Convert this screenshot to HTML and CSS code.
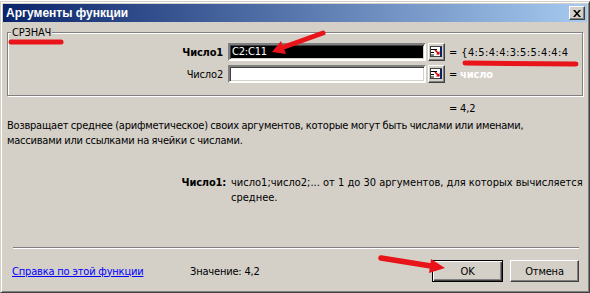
FILE: index.html
```
<!DOCTYPE html>
<html lang="ru">
<head>
<meta charset="utf-8">
<title>Аргументы функции</title>
<link rel="stylesheet" href="styles.css">
</head>
<body>
<div class="window">
  <div class="titlebar">
    <span class="title">Аргументы функции</span>
    <span class="close-btn"><svg width="8" height="7" viewBox="0 0 8 7"><path d="M0 0h2l2 2.2L6 0h2L5 3.5 8 7H6L4 4.8 2 7H0l3-3.5z" fill="#000"/></svg></span>
  </div>
  <div class="group">
    <div class="legend">СРЗНАЧ</div>
    <div class="arg-row">
      <span class="arg-label bold">Число1</span>
      <span class="field selected">C2:C11</span>
      <span class="ref-btn"><svg width="13" height="12" viewBox="0 0 13 12"><rect x="0.5" y="0.5" width="11" height="10" fill="#fff" stroke="#404040"/><path d="M1 3.5h6M1 6.5h3M1 9h3" stroke="#000"/><rect x="10" y="1" width="2" height="10" fill="#0a246a"/><path d="M5 4l4 4" stroke="#d00000" stroke-width="1.6"/><path d="M9.5 5v3.5H6z" fill="#d00000"/></svg></span>
      <span class="arg-value wide">= {4:5:4:4:3:5:5:4:4:4</span>
    </div>
    <div class="arg-row">
      <span class="arg-label">Число2</span>
      <span class="field"></span>
      <span class="ref-btn"><svg width="13" height="12" viewBox="0 0 13 12"><rect x="0.5" y="0.5" width="11" height="10" fill="#fff" stroke="#404040"/><path d="M1 3.5h6M1 6.5h3M1 9h3" stroke="#000"/><rect x="10" y="1" width="2" height="10" fill="#0a246a"/><path d="M5 4l4 4" stroke="#d00000" stroke-width="1.6"/><path d="M9.5 5v3.5H6z" fill="#d00000"/></svg></span>
      <span class="arg-value">= <b class="placeholder">число</b></span>
    </div>
  </div>
  <div class="result">= 4,2</div>
  <p class="desc">Возвращает среднее (арифметическое) своих аргументов, которые могут быть числами или именами,<br>массивами или ссылками на ячейки с числами.</p>
  <div class="arg-help">
    <span class="help-label bold">Число1:</span>
    <span class="help-text">число1;число2;... от 1 до 30 аргументов, для которых вычисляется<br>среднее.</span>
  </div>
  <div class="separator"></div>
  <div class="footer">
    <a class="help-link" href="#">Справка по этой функции</a>
    <span class="value">Значение:&nbsp;4,2</span>
    <span class="btn default">OK</span>
    <span class="btn">Отмена</span>
  </div>
</div>
<svg class="marks" width="590" height="293" viewBox="0 0 590 293">
  <g stroke="#e8141a" stroke-width="5" stroke-linecap="round" fill="none">
    <path d="M11 42 L61 42"/>
    <path d="M465 63 L576 64"/>
    <path d="M323 33 L284 47"/>
    <path d="M381 258 L431 266" stroke-width="5.5"/>
  </g>
  <g fill="#e8141a">
    <polygon points="272,52 286,54 281,41"/>
    <polygon points="445,268 429,273 431,259"/>
  </g>
</svg>
</body>
</html>
```
FILE: styles.css
```
body {
  margin: 0;
  background: #fff;
  font: 11px "DejaVu Sans Condensed", "Liberation Sans", sans-serif;
  letter-spacing: -0.18px;
  color: #000;
  position: relative;
}

.window {
  box-sizing: border-box;
  width: 590px;
  height: 292px;
  margin-top: 1px;
  border: 1px solid;
  border-color: #d4d0c8 #404040 #404040 #d4d0c8;
  box-shadow: inset 1px 1px #fff, inset -1px -1px #808080;
  background: #d4d0c8;
  padding: 2px;
}

.titlebar {
  height: 18px;
  display: flex;
  align-items: center;
  justify-content: space-between;
  padding: 0 2px 0 3px;
  background: linear-gradient(to right, #0a246a, #a6caf0);
}

.title {
  color: #fff;
  font: bold 12px "Liberation Sans", Arial, sans-serif;
  letter-spacing: 0;
}

.close-btn {
  box-sizing: border-box;
  width: 16px;
  height: 14px;
  display: flex;
  align-items: center;
  justify-content: center;
  background: #d4d0c8;
  border: 1px solid;
  border-color: #fff #404040 #404040 #fff;
  box-shadow: inset -1px -1px #808080;
}

.bold { font-weight: bold; }

.group {
  box-sizing: border-box;
  height: 64px;
  margin: 10px 4px 0;
  border: 1px solid #808080;
  box-shadow: inset 1px 1px #fff, 1px 1px #fff;
}

.legend {
  width: max-content;
  height: 13px;
  line-height: 13px;
  margin: -7px 0 0 3px;
  padding: 0 1px;
  background: #d4d0c8;
}

.arg-row {
  display: flex;
  align-items: center;
  height: 18px;
  margin-top: 4px;
}

.arg-label {
  width: 215px;
  text-align: right;
  margin-right: 5px;
}

.field {
  box-sizing: border-box;
  width: 198px;
  height: 18px;
  padding: 0 2px;
  line-height: 14px;
  background: #fff;
  border: 2px solid;
  border-color: #808080 #fff #fff #808080;
  box-shadow: inset 1px 1px #404040, inset -1px -1px #d4d0c8;
}

.field.selected {
  background: #000;
  color: #fff;
}

.ref-btn {
  box-sizing: border-box;
  width: 17px;
  height: 18px;
  margin-left: 2px;
  display: flex;
  align-items: center;
  justify-content: center;
  border: 1px solid;
  border-color: #fff #404040 #404040 #fff;
  box-shadow: inset -1px -1px #808080;
}

.arg-value {
  margin-left: 4px;
  white-space: nowrap;
}

.wide {
  letter-spacing: 0.4px;
}

.placeholder {
  color: #fff;
}

.result {
  margin: 6px 0 0 446px;
  line-height: 14px;
}

.desc {
  margin: 2px 0 0 4px;
  line-height: 15px;
  letter-spacing: -0.22px;
  word-spacing: -0.4px;
}

.arg-help {
  display: flex;
  margin-top: 27px;
  line-height: 15px;
}

.help-label {
  width: 223px;
  text-align: right;
  margin-right: 5px;
}

.help-text {
  letter-spacing: 0;
}

.separator {
  margin: 42px 8px 0 10px;
  border-top: 1px solid #808080;
  border-bottom: 1px solid #fff;
}

.footer {
  display: flex;
  align-items: center;
  margin-top: 11px;
  padding: 0 8px 0 9px;
}

.help-link {
  width: 178px;
  color: #0000ff;
  text-decoration: underline;
}

.value {
  margin-right: auto;
}

.btn {
  box-sizing: border-box;
  width: 69px;
  height: 22px;
  display: flex;
  align-items: center;
  justify-content: center;
  background: #d4d0c8;
  border: 1px solid;
  border-color: #fff #404040 #404040 #fff;
  box-shadow: inset -1px -1px #808080;
}

.btn.default {
  width: 71px;
  margin-right: 7px;
  border: 1px solid #000;
  box-shadow: inset 1px 1px #fff, inset -1px -1px #404040, inset -2px -2px #808080;
}

.marks {
  position: absolute;
  top: 0;
  left: 0;
  pointer-events: none;
}
```
